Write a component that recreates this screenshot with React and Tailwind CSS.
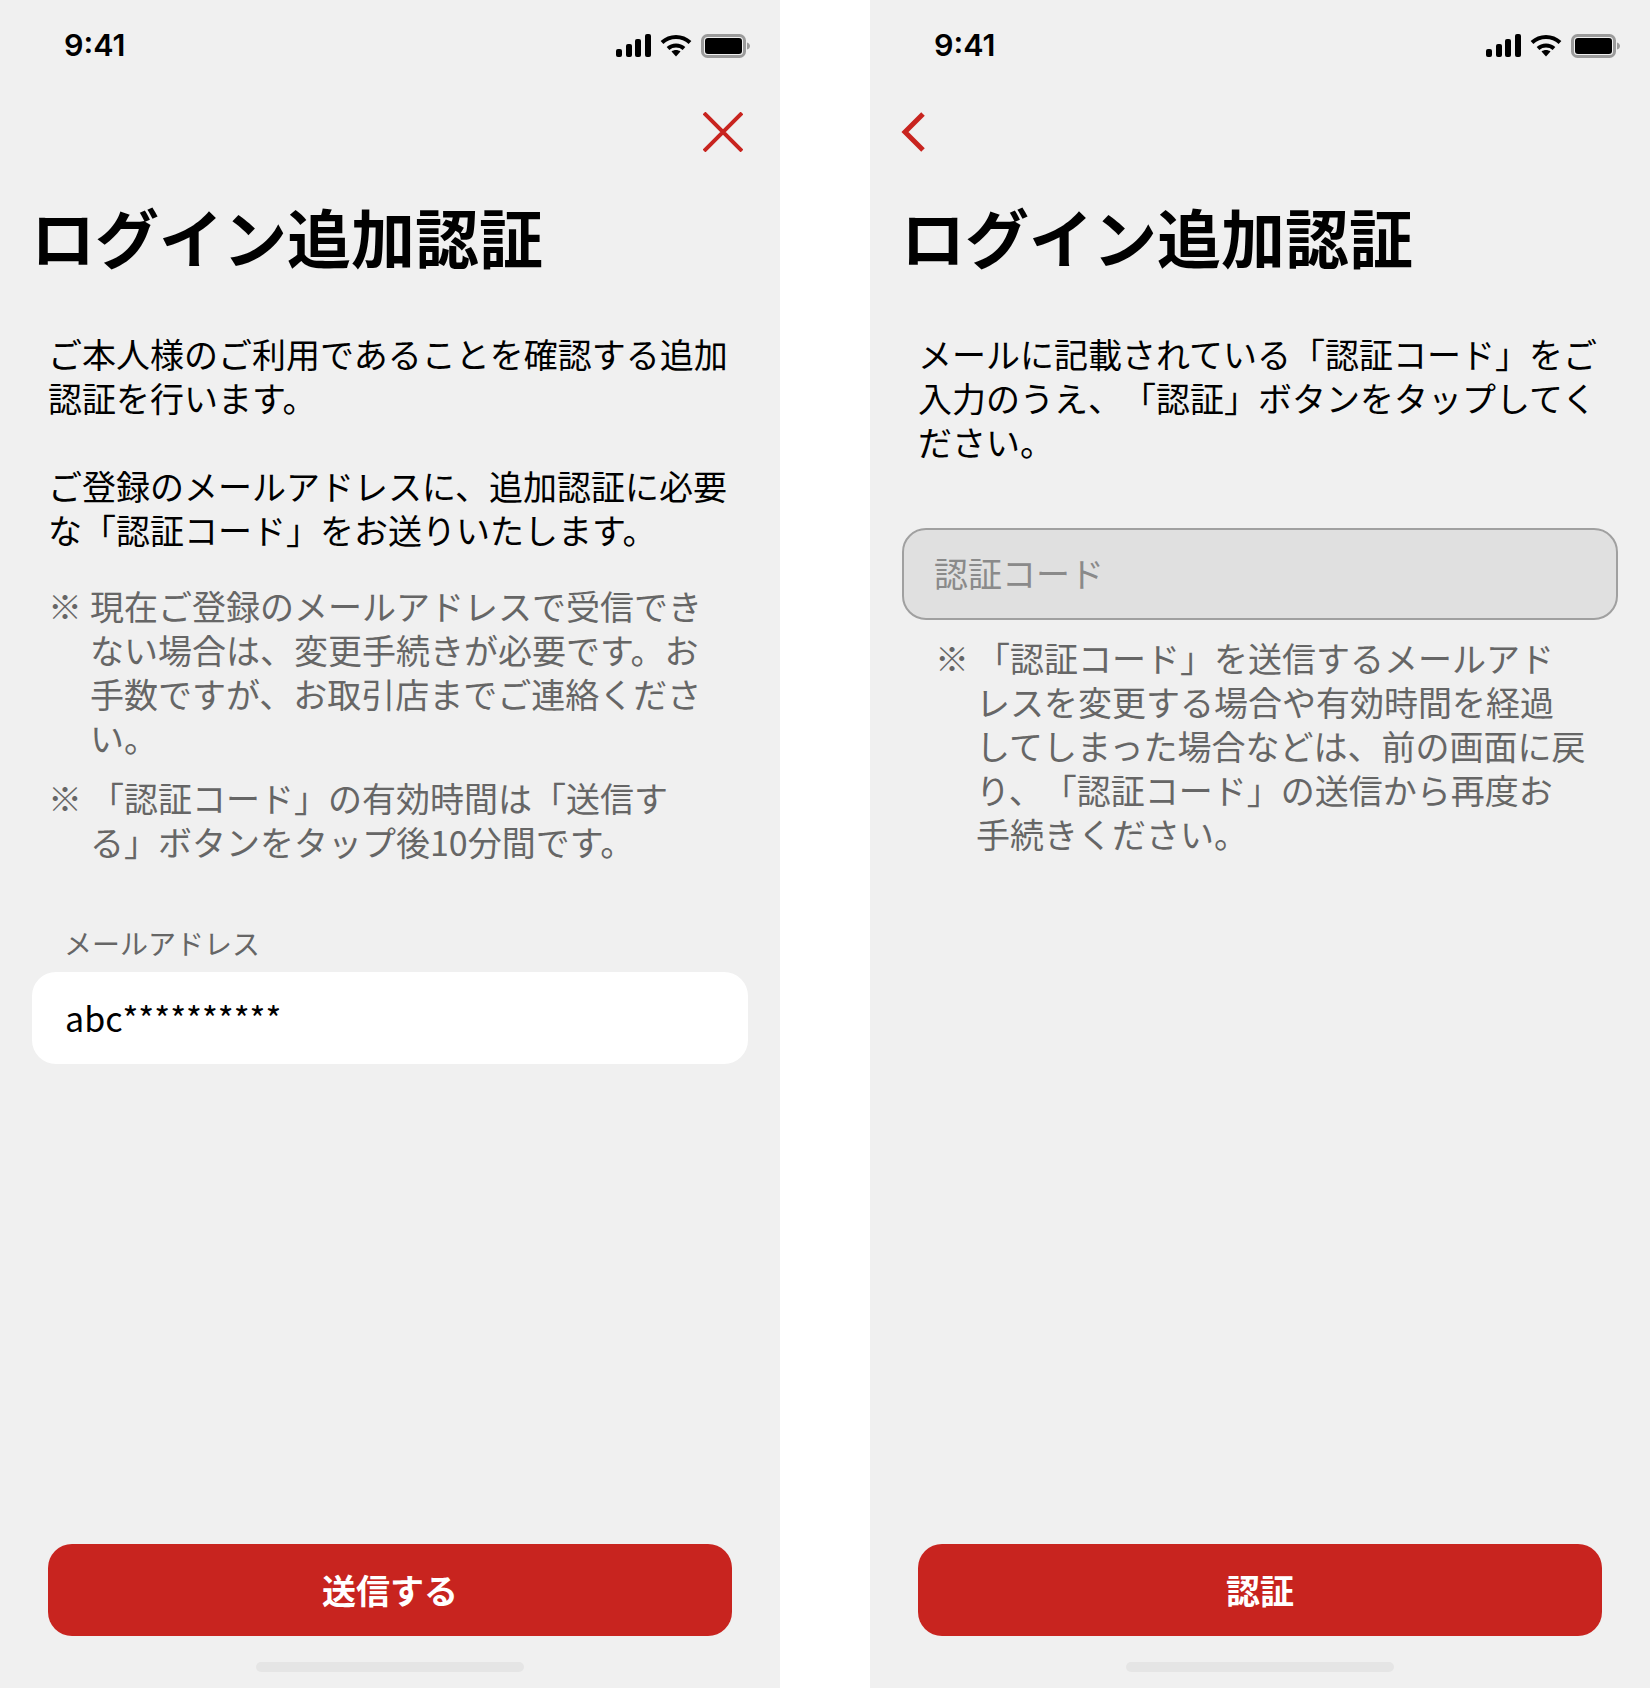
const font = "font-['Noto_Sans_CJK_JP','Noto_Sans',sans-serif] [text-spacing-trim:space-all]";

function StatusBar() {
  return (
    <div className="h-[92px] pb-[1px] flex items-center justify-between pl-[64px] pr-[29px]">
      <span className="font-['Inter',sans-serif] text-[30.5px] font-semibold text-black leading-none">9:41</span>
      <div className="flex items-center gap-[9px]">
        <svg width="35" height="23" viewBox="0 0 35 23" fill="#000">
          <rect x="0" y="15" width="6" height="8" rx="2" />
          <rect x="10" y="10" width="6" height="13" rx="2" />
          <rect x="19" y="5" width="6" height="18" rx="2" />
          <rect x="29" y="0" width="6" height="23" rx="2" />
        </svg>
        <svg width="32" height="23" viewBox="0 0 32 23" fill="none" stroke="#000" strokeWidth="4">
          <path d="M2 8.5C10 1 22 1 30 8.5" />
          <path d="M8 14.5C12.500 10.500 19.500 10.500 24 14.500" />
          <path d="M11.500 17.500L16 22.500L20.500 17.500C18 15.500 14 15.500 11.500 17.500Z" fill="#000" stroke="none" />
        </svg>
        <svg width="50" height="24" viewBox="0 0 50 24">
          <rect x="1.500" y="1.500" width="42" height="21" rx="5" fill="none" stroke="#9b9b9b" strokeWidth="3" />
          <rect x="4" y="4" width="37" height="16" rx="3" fill="#000" />
          <path d="M46 8.500C48 9 49 10.500 49 12C49 13.500 48 15 46 15.500Z" fill="#9b9b9b" />
        </svg>
      </div>
    </div>
  );
}

function Note({ children, indent = "pl-[42px]" }) {
  return (
    <p className={`relative whitespace-nowrap text-[34px] leading-[44px] text-[#666666] ${indent}`}>
      <span className="absolute top-0 left-0">※</span>
      {children}
    </p>
  );
}

function Panel({ icon, iconAlign, button, children }) {
  return (
    <div className={`relative w-[780px] h-[1688px] flex flex-col bg-[#f0f0f0] ${font}`}>
      <StatusBar />
      <div className={`h-[78px] pt-[1px] flex items-center ${iconAlign}`}>{icon}</div>
      <h1 className="mt-[21px] pl-[31px] text-[64px] leading-[88px] font-bold text-black whitespace-nowrap">
        ログイン追加認証
      </h1>
      {children}
      <button className="mt-auto mx-[48px] h-[92px] pb-[2px] shrink-0 rounded-[24px] bg-[#c8241f] text-white text-[34px] font-bold">
        {button}
      </button>
      <div className="mt-[26px] mb-[16px] mx-auto w-[268px] h-[10px] rounded-full bg-[#e5e5e5]" />
    </div>
  );
}

export default function App() {
  return (
    <div className="w-[1650px] h-[1688px] flex justify-between bg-white overflow-hidden">
      <Panel
        button="送信する"
        iconAlign="justify-end pr-[37px]"
        icon={
          <svg width="40" height="40" viewBox="0 0 40 40" fill="none" stroke="#c8241f" strokeWidth="4">
            <path d="M1 1L39 39M39 1L1 39" />
          </svg>
        }
      >
        <p className="mt-[53px] pl-[48px] whitespace-nowrap text-[34px] leading-[44px] text-black">
          ご本人様のご利用であることを確認する追加
          <br />
          認証を行います。
          <br />
          <br />
          ご登録のメールアドレスに、追加認証に必要
          <br />
          な「認証コード」をお送りいたします。
        </p>
        <div className="mt-[32px] ml-[48px] flex flex-col gap-[16px]">
          <Note>
            現在ご登録のメールアドレスで受信でき
            <br />
            ない場合は、変更手続きが必要です。お
            <br />
            手数ですが、お取引店までご連絡くださ
            <br />
            い。
          </Note>
          <Note>
            「認証コード」の有効時間は「送信す
            <br />
            る」ボタンをタップ後10分間です。
          </Note>
        </div>
        <p className="mt-[58px] pl-[64px] text-[28px] leading-[42px] text-[#666666]">メールアドレス</p>
        <div className="mt-[8px] mx-[32px] h-[92px] pb-[2px] flex items-center px-[33px] rounded-[24px] bg-white text-[34px] text-black">
          abc**********
        </div>
      </Panel>
      <Panel
        button="認証"
        iconAlign="pl-[31px]"
        icon={
          <svg width="24" height="40" viewBox="0 0 24 40" fill="none" stroke="#c8241f" strokeWidth="5">
            <path d="M22 2L4 20L22 38" />
          </svg>
        }
      >
        <p className="mt-[53px] pl-[48px] whitespace-nowrap text-[34px] leading-[44px] text-black">
          メールに記載されている「認証コード」をご
          <br />
          入力のうえ、「認証」ボタンをタップしてく
          <br />
          ださい。
        </p>
        <div className="mt-[64px] mx-[32px] h-[92px] pb-[4px] flex items-center px-[30px] rounded-[24px] border-2 border-[#a0a0a0] bg-[#e0e0e0] text-[34px] text-[#8a8a8a]">
          認証コード
        </div>
        <div className="mt-[16px] ml-[65px]">
          <Note indent="pl-[41px]">
            「認証コード」を送信するメールアド
            <br />
            レスを変更する場合や有効時間を経過
            <br />
            してしまった場合などは、前の画面に戻
            <br />
            り、「認証コード」の送信から再度お
            <br />
            手続きください。
          </Note>
        </div>
      </Panel>
    </div>
  );
}
